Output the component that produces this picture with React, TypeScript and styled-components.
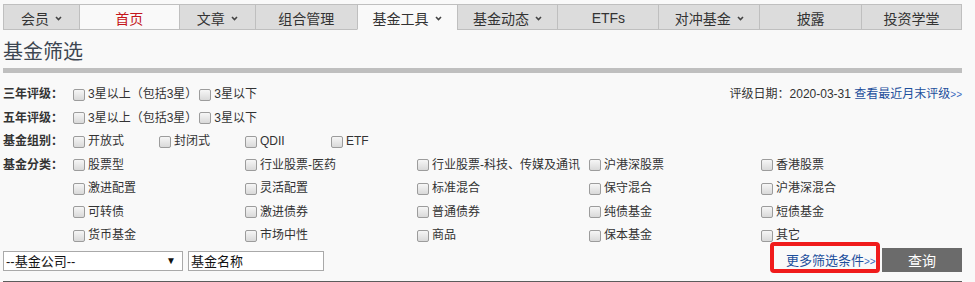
import styled, { createGlobalStyle } from "styled-components";

const GlobalStyle = createGlobalStyle`
  body {
    margin: 0;
    background: #f9f9f9;
    font-family: "Liberation Sans", "Noto Sans CJK SC", sans-serif;
    color: #333;
  }
`;

const tabs = [
  { name: "会员", w: 76, menu: true },
  { name: "首页", w: 100, home: true },
  { name: "文章", w: 76, menu: true },
  { name: "组合管理", w: 102 },
  { name: "基金工具", w: 100, menu: true, open: true },
  { name: "基金动态", w: 101, menu: true },
  { name: "ETFs", w: 101 },
  { name: "对冲基金", w: 101, menu: true },
  { name: "披露", w: 102 },
  { name: "投资学堂", w: 101 },
];

const categories = [
  "股票型", "行业股票-医药", "行业股票-科技、传媒及通讯", "沪港深股票", "香港股票",
  "激进配置", "灵活配置", "标准混合", "保守混合", "沪港深混合",
  "可转债", "激进债券", "普通债券", "纯债基金", "短债基金",
  "货币基金", "市场中性", "商品", "保本基金", "其它",
];

const Page = styled.div`
  width: 959px;
  margin-left: 3px;
`;

const Nav = styled.ul`
  display: flex;
  margin: 4px 0 0;
  padding: 0;
  list-style: none;
`;

const Tab = styled.li<{ $w: number; $white?: boolean; $open?: boolean; $red?: boolean }>`
  box-sizing: border-box;
  width: ${(p) => p.$w}px;
  height: 26px;
  padding-top: 1px;
  display: flex;
  align-items: center;
  justify-content: center;
  gap: 6px;
  background: ${(p) => (p.$white ? "#f9f9f9" : "#dcdcdc")};
  border: 1px solid #bfbfbf;
  border-right: none;
  border-bottom-color: ${(p) => (p.$open ? "#f9f9f9" : "#bfbfbf")};
  color: ${(p) => (p.$red ? "#c4161c" : "#333")};
  font-size: 14px;
  &:last-child {
    border-right: 1px solid #bfbfbf;
  }
`;

const Caret = styled.svg`
  width: 7px;
  height: 5px;
  margin-top: 2px;
`;

const Title = styled.h1`
  margin: 10px 0 0;
  font-size: 20px;
  line-height: 24px;
  font-weight: normal;
  color: #3d4651;
`;

const Bar = styled.div`
  height: 5px;
  margin-top: 4px;
  background: #bfbfbf;
`;

const Filters = styled.div`
  margin-top: 10px;
  font-size: 12px;
`;

const Row = styled.div`
  display: flex;
  align-items: flex-start;
  line-height: 23.5px;
`;

const Label = styled.div`
  width: 70px;
  flex: none;
  font-weight: bold;
  color: #333;
`;

const Options = styled.div<{ $col?: number }>`
  display: ${(p) => (p.$col ? "grid" : "flex")};
  grid-template-columns: ${(p) => (p.$col ? `repeat(auto-fill, ${p.$col}px)` : "none")};
  gap: 0 2px;
  flex: 1;
`;

const Option = styled.label`
  display: flex;
  align-items: center;
  height: 23.5px;
  white-space: nowrap;
  color: #333;
`;

const Box = styled.span`
  box-sizing: border-box;
  width: 12px;
  height: 12px;
  margin-right: 3px;
  border: 1px solid #9c9c9c;
  border-radius: 2px;
  background: linear-gradient(#f6f6f6, #d9d9d9);
  flex: none;
`;

const RateInfo = styled.div`
  margin-left: auto;
  color: #333;
  white-space: nowrap;
`;

const Link = styled.a`
  color: #1d4f9c;
  text-decoration: none;
`;

const Arrows = styled.span`
  font-size: 10px;
  color: #3a6cc0;
`;

const Bottom = styled.div`
  display: flex;
  align-items: flex-start;
  height: 24px;
`;

const Select = styled.div`
  box-sizing: border-box;
  width: 180px;
  height: 20px;
  margin-top: 3px;
  padding: 0 6px 0 2px;
  display: flex;
  align-items: center;
  justify-content: space-between;
  background: #fff;
  border: 1px solid #a9a9a9;
  font-size: 13px;
  color: #111;
`;

const Input = styled.input`
  box-sizing: border-box;
  width: 136px;
  height: 20px;
  margin: 3px 0 0 5px;
  padding: 0 2px;
  background: #fff;
  border: 1px solid #a9a9a9;
  font-family: inherit;
  font-size: 13px;
  color: #111;
  outline: none;
`;

const More = styled.div`
  position: relative;
  box-sizing: border-box;
  width: 110px;
  height: 24px;
  margin-left: auto;
  padding-left: 16px;
  display: flex;
  align-items: center;
  font-size: 13px;
  &::after {
    content: "";
    position: absolute;
    left: 0;
    right: 0;
    top: -6px;
    bottom: -1px;
    border: 4px solid #f01b1b;
    border-radius: 4px;
  }
`;

const Query = styled.button`
  width: 80px;
  height: 24px;
  margin-left: 2px;
  border: none;
  background: #6b6b6b;
  color: #fff;
  font-family: inherit;
  font-size: 14px;
`;

const Rule = styled.div`
  margin-top: 9px;
  border-top: 2px solid #5c5c5c;
`;

const Check = ({ text }: { text: string }) => (
  <Option>
    <Box />
    {text}
  </Option>
);

export default function App() {
  return (
    <>
      <GlobalStyle />
      <Page>
        <Nav>
          {tabs.map((t) => (
            <Tab key={t.name} $w={t.w} $white={t.home || t.open} $open={t.open} $red={t.home}>
              {t.name}
              {t.menu && (
                <Caret viewBox="0 0 7 5">
                  <path d="M1 1 L3.5 3.5 L6 1" stroke="#444" strokeWidth="1.6" fill="none" />
                </Caret>
              )}
            </Tab>
          ))}
        </Nav>
        <Title>基金筛选</Title>
        <Bar />
        <Filters>
          <Row>
            <Label>三年评级：</Label>
            <Options>
              <Check text="3星以上（包括3星）" />
              <Check text="3星以下" />
              <RateInfo>
                评级日期：2020-03-31 <Link href="#">查看最近月末评级<Arrows>&gt;&gt;</Arrows></Link>
              </RateInfo>
            </Options>
          </Row>
          <Row>
            <Label>五年评级：</Label>
            <Options>
              <Check text="3星以上（包括3星）" />
              <Check text="3星以下" />
            </Options>
          </Row>
          <Row>
            <Label>基金组别：</Label>
            <Options $col={84}>
              {["开放式", "封闭式", "QDII", "ETF"].map((g) => (
                <Check key={g} text={g} />
              ))}
            </Options>
          </Row>
          <Row>
            <Label>基金分类：</Label>
            <Options $col={170}>
              {categories.map((c) => (
                <Check key={c} text={c} />
              ))}
            </Options>
          </Row>
        </Filters>
        <Bottom>
          <Select>
            --基金公司--
            <span style={{ fontSize: 10 }}>▼</span>
          </Select>
          <Input defaultValue="基金名称" />
          <More>
            <Link href="#">更多筛选条件<Arrows>&gt;&gt;</Arrows></Link>
          </More>
          <Query>查询</Query>
        </Bottom>
        <Rule />
      </Page>
    </>
  );
}
